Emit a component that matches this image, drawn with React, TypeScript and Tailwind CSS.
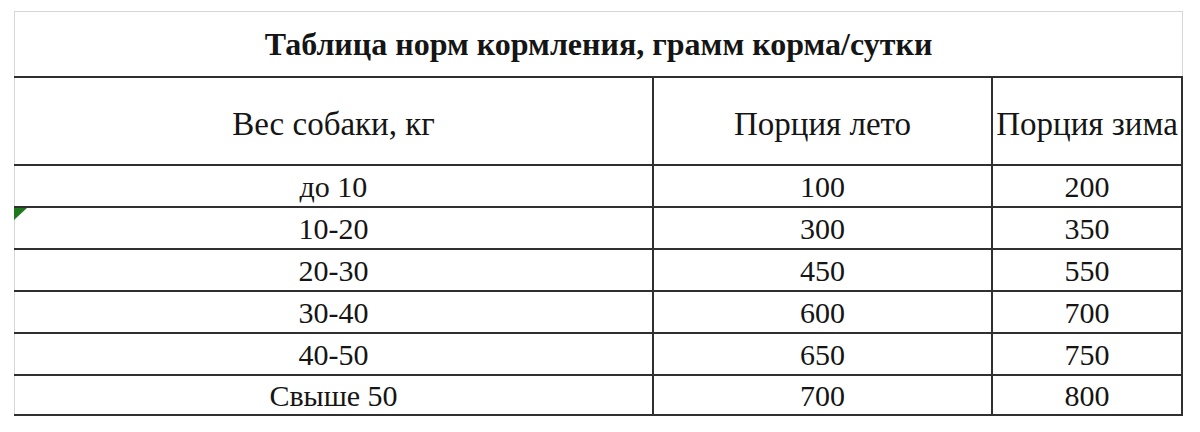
import React from "react";

const rows: [string, string, string][] = [
  ["до 10", "100", "200"],
  ["10-20", "300", "350"],
  ["20-30", "450", "550"],
  ["30-40", "600", "700"],
  ["40-50", "650", "750"],
  ["Свыше 50", "700", "800"],
];

export default function App() {
  return (
    <div
      className="w-[1200px] h-[432px] bg-white pt-[11px] pl-[14px] text-[#151515]"
      style={{ fontFamily: '"Liberation Serif", "Times New Roman", serif' }}
    >
      <div className="w-[1169px]">
        <div className="h-[65px] border-t border-l border-r border-[#d6d6d6] flex items-center justify-center font-bold text-[32px] leading-none">
          Таблица норм кормления, грамм корма/сутки
        </div>
        <div className="flex h-[88px] border-t-2 border-[#303030] text-[33px] leading-none">
          <div className="w-[640px] border-l border-l-[#d6d6d6] border-r-2 border-r-[#303030] flex items-center justify-center pt-[6px]">
            Вес собаки, кг
          </div>
          <div className="w-[339px] border-r-2 border-[#303030] flex items-center justify-center pt-[6px]">
            Порция лето
          </div>
          <div className="w-[190px] border-r-2 border-[#303030] flex items-center justify-center pt-[6px]">
            Порция зима
          </div>
        </div>
        {rows.map((r, i) => (
          <div
            key={i}
            className={
              "relative flex h-[42px] border-t-2 border-[#303030] text-[30px] leading-none" +
              (i === rows.length - 1 ? " border-b-2" : "")
            }
          >
            {i === 1 && (
              <svg className="absolute left-0 top-0" width="13" height="12" viewBox="0 0 13 12">
                <polygon points="0,0 13,0 0,12" fill="#1f7a1f" />
              </svg>
            )}
            <div className="w-[640px] border-l border-l-[#d6d6d6] border-r-2 border-r-[#303030] flex items-center justify-center pt-[2px]">
              {r[0]}
            </div>
            <div className="w-[339px] border-r-2 border-[#303030] flex items-center justify-center pt-[2px]">
              {r[1]}
            </div>
            <div className="w-[190px] border-r-2 border-[#303030] flex items-center justify-center pt-[2px]">
              {r[2]}
            </div>
          </div>
        ))}
      </div>
    </div>
  );
}
